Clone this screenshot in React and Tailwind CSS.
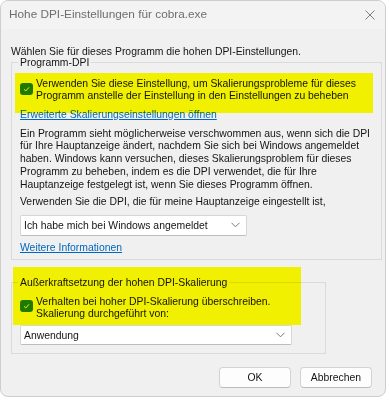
import React from "react";

// small drop-down arrow used in both combo boxes
const Chevron = () => (
    <svg width="9" height="6" viewBox="0 0 9 6" fill="none">
        <path d="M0.5 0.8 L4.5 4.8 L8.5 0.8" stroke="#6b6b6b" strokeWidth="0.9" />
    </svg>
);

const CheckBox = ({ top }) => (
    <div className={`w-[13px] h-[12px] rounded-[3px] bg-[#1e7a32] flex items-center justify-center shrink-0 ${top}`}>
        <svg width="9" height="8" viewBox="0 0 9 8" fill="none">
            <path d="M2 4.3 L3.8 6 L7 2.3" stroke="#e8f5e8" strokeWidth="1" />
        </svg>
    </div>
);

const Combo = ({ text, width, height }) => (
    <div className={`${width} ${height} ml-[8px] bg-white border border-[#d6d6d6] border-b-[#bdbdbd] rounded-[2px] flex items-center justify-between pl-[3px] pr-[6px]`}>
        <span className="whitespace-nowrap">{text}</span>
        <Chevron />
    </div>
);

const App = () => {
    return (
        <div className="relative w-[389px] h-[400px] bg-white text-[10.4px] text-[#141414]" style={{ fontFamily: '"Liberation Sans", Arial, sans-serif' }}>
            <div className="w-[386px] h-[397px] border border-[#cdcdcd] rounded-[8px] overflow-hidden bg-[#f0f0f0] flex flex-col">
                {/* title bar */}
                <div className="h-[28px] bg-[#f3f3f3] flex items-center justify-between pl-[8px] pr-[10px] shrink-0">
                    <span className="text-[11.8px] text-[#6e6e6e] whitespace-nowrap">Hohe DPI-Einstellungen für cobra.exe</span>
                    <svg width="10" height="10" viewBox="0 0 10 10" fill="none">
                        <path d="M0.5 0.5 L9.5 9.5 M9.5 0.5 L0.5 9.5" stroke="#707070" strokeWidth="0.9" />
                    </svg>
                </div>

                <div className="pl-[10px] leading-[13px]">
                    <p className="mt-[16px] whitespace-nowrap">Wählen Sie für dieses Programm die hohen DPI-Einstellungen.</p>

                    {/* Programm-DPI group */}
                    <fieldset className="mt-[-2.5px] w-[371px] border border-[#dadada] pb-[5px]">
                        <legend className="ml-[6px] px-[2px] leading-[13px]">Programm-DPI</legend>
                        <div className="flex items-start mt-[9.5px] ml-[8px]">
                            <CheckBox top="mt-[5px]" />
                            <p className="ml-[3px] leading-[12px] whitespace-nowrap">
                                Verwenden Sie diese Einstellung, um Skalierungsprobleme für dieses<br />
                                Programm anstelle der Einstellung in den Einstellungen zu beheben
                            </p>
                        </div>
                        <p className="mt-[5.5px] ml-[8px] text-[#0067c0] underline">Erweiterte Skalierungseinstellungen öffnen</p>
                        <p className="mt-[7px] ml-[8px] leading-[12.75px] whitespace-nowrap">
                            Ein Programm sieht möglicherweise verschwommen aus, wenn sich die DPI<br />
                            für Ihre Hauptanzeige ändert, nachdem Sie sich bei Windows angemeldet<br />
                            haben. Windows kann versuchen, dieses Skalierungsproblem für dieses<br />
                            Programm zu beheben, indem es die DPI verwendet, die für Ihre<br />
                            Hauptanzeige festgelegt ist, wenn Sie dieses Programm öffnen.
                        </p>
                        <p className="mt-[4px] ml-[8px] whitespace-nowrap">Verwenden Sie die DPI, die für meine Hauptanzeige eingestellt ist,</p>
                        <div className="mt-[6.5px]">
                            <Combo text="Ich habe mich bei Windows angemeldet" width="w-[227px]" height="h-[21px]" />
                        </div>
                        <p className="mt-[5.5px] ml-[8px] text-[#0067c0] underline">Weitere Informationen</p>
                    </fieldset>

                    {/* override group */}
                    <fieldset className="mt-[15.5px] w-[315px] border border-[#dadada] pb-[8px]">
                        <legend className="ml-[6px] px-[2px] leading-[13px] whitespace-nowrap">Außerkraftsetzung der hohen DPI-Skalierung</legend>
                        <div className="flex items-start mt-[7px] ml-[8px]">
                            <CheckBox top="mt-[4px]" />
                            <p className="ml-[3px] leading-[12px] whitespace-nowrap">
                                Verhalten bei hoher DPI-Skalierung überschreiben.<br />
                                Skalierung durchgeführt von:
                            </p>
                        </div>
                        <div className="mt-[5.5px]">
                            <Combo text="Anwendung" width="w-[272px]" height="h-[20px]" />
                        </div>
                    </fieldset>

                    <div className="flex justify-end gap-[9px] mt-[13px] pr-[13px]">
                        <button className="w-[72px] h-[21px] bg-[#fdfdfd] border border-[#d3d3d3] border-b-[#bcbcbc] rounded-[4px]">OK</button>
                        <button className="w-[72px] h-[21px] bg-[#fdfdfd] border border-[#d3d3d3] border-b-[#bcbcbc] rounded-[4px]">Abbrechen</button>
                    </div>
                </div>
            </div>

            {/* highlighter marks drawn over the dialog */}
            <div className="absolute left-[15px] top-[73px] w-[358px] h-[40px] bg-[#ffff00] mix-blend-multiply pointer-events-none" />
            <div className="absolute left-[13px] top-[267px] w-[288px] h-[58px] bg-[#ffff00] mix-blend-multiply pointer-events-none" />
        </div>
    );
};

export default App;
